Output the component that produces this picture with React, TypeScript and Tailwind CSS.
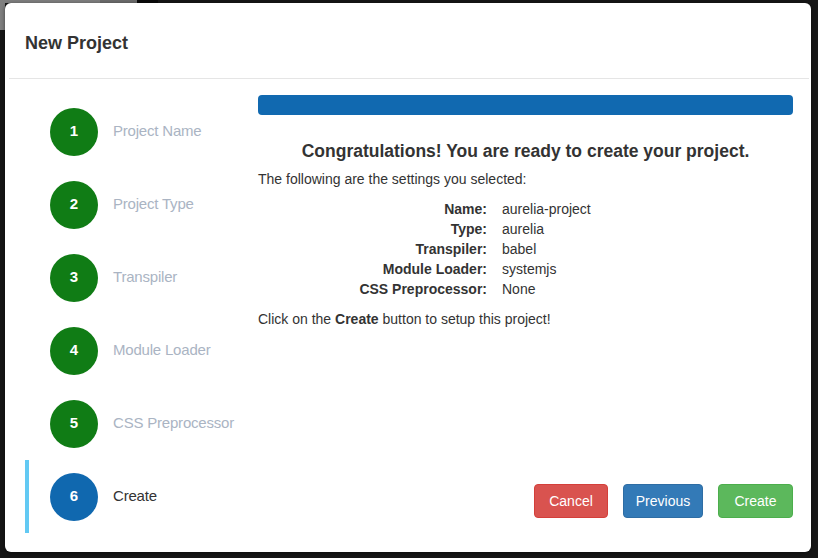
const steps = [
  { n: 1, label: 'Project Name' },
  { n: 2, label: 'Project Type' },
  { n: 3, label: 'Transpiler' },
  { n: 4, label: 'Module Loader' },
  { n: 5, label: 'CSS Preprocessor' },
  { n: 6, label: 'Create', active: true },
]

const settings = [
  ['Name:', 'aurelia-project'],
  ['Type:', 'aurelia'],
  ['Transpiler:', 'babel'],
  ['Module Loader:', 'systemjs'],
  ['CSS Preprocessor:', 'None'],
]

export default function App() {
  return (
    <div className="w-[818px] h-[558px] bg-[#161616] flex flex-col overflow-hidden font-['Liberation_Sans',Arial,sans-serif] text-[#333]">
      {/* backdrop bits peeking around the dialog */}
      <div className="h-[3px] flex shrink-0">
        <div className="w-[100px] bg-[#7f7f7f]" />
        <div className="w-[37px] bg-[#6c6c6c]" />
        <div className="w-[21px] bg-[#0a0a0a]" />
      </div>
      <div className="flex">
        <div className="w-[5px] shrink-0 flex flex-col">
          <div className="h-[27px] bg-[#7f7f7f]" />
        </div>

        {/* Dialog */}
        <div className="w-[806px] h-[549px] shrink-0 bg-white rounded-[6px] shadow-[0_1px_4px_rgba(0,0,0,0.5)] flex flex-col">
          <div className="h-[75px] pl-[20px] pt-[30px]">
            <h1 className="text-[18px] leading-[20px] font-bold">New Project</h1>
          </div>
          <div className="h-px bg-[#e5e5e5] ml-[4px] mr-[2px]" />

          <div className="flex pt-[16px]">
            {/* Steps */}
            <div className="w-[253px] pl-[20px]">
              {steps.map((s) => (
                <div
                  key={s.n}
                  className={
                    s.active
                      ? 'h-[73px] flex items-center border-l-4 border-[#62c9f3]'
                      : 'h-[73px] flex items-center border-l-4 border-transparent'
                  }
                >
                  <div
                    className={
                      s.active
                        ? 'ml-[21px] w-[48px] h-[48px] rounded-full bg-[#1068af] flex items-center justify-center text-white text-[15px] font-bold'
                        : 'ml-[21px] w-[48px] h-[48px] rounded-full bg-[#107c15] flex items-center justify-center text-white text-[15px] font-bold'
                    }
                  >
                    {s.n}
                  </div>
                  <span
                    className={
                      s.active
                        ? 'ml-[15px] text-[15px] tracking-[-0.2px] text-[#333]'
                        : 'ml-[15px] text-[15px] tracking-[-0.2px] text-[#aab4c3]'
                    }
                  >
                    {s.label}
                  </span>
                </div>
              ))}
            </div>

            {/* Summary */}
            <div className="w-[535px] h-[438px] flex flex-col">
              <div className="h-[20px] rounded-[4px] bg-[#1169b0]" />
              <h2 className="mt-[26px] text-center text-[17.5px] leading-[20px] font-bold">
                Congratulations! You are ready to create your project.
              </h2>
              <p className="mt-[8px] text-[14px] leading-[20px]">The following are the settings you selected:</p>
              <dl className="mt-[10px] grid grid-cols-[229px_1fr] gap-x-[15px] text-[14px] leading-[20px]">
                {settings.map(([k, v]) => (
                  <div key={k} className="contents">
                    <dt className="text-right font-bold">{k}</dt>
                    <dd>{v}</dd>
                  </div>
                ))}
              </dl>
              <p className="mt-[10px] text-[14px] leading-[20px]">
                Click on the <b>Create</b> button to setup this project!
              </p>

              <div className="mt-auto mb-[15px] flex justify-end gap-[15px]">
                <button className="w-[74px] h-[34px] rounded-[4px] border border-[#d43f3a] bg-[#d9534f] text-white text-[14px]">
                  Cancel
                </button>
                <button className="w-[80px] h-[34px] rounded-[4px] border border-[#2e6da4] bg-[#337ab7] text-white text-[14px]">
                  Previous
                </button>
                <button className="w-[75px] h-[34px] rounded-[4px] border border-[#4cae4c] bg-[#5cb85c] text-white text-[14px]">
                  Create
                </button>
              </div>
            </div>
          </div>
        </div>
      </div>
    </div>
  )
}
